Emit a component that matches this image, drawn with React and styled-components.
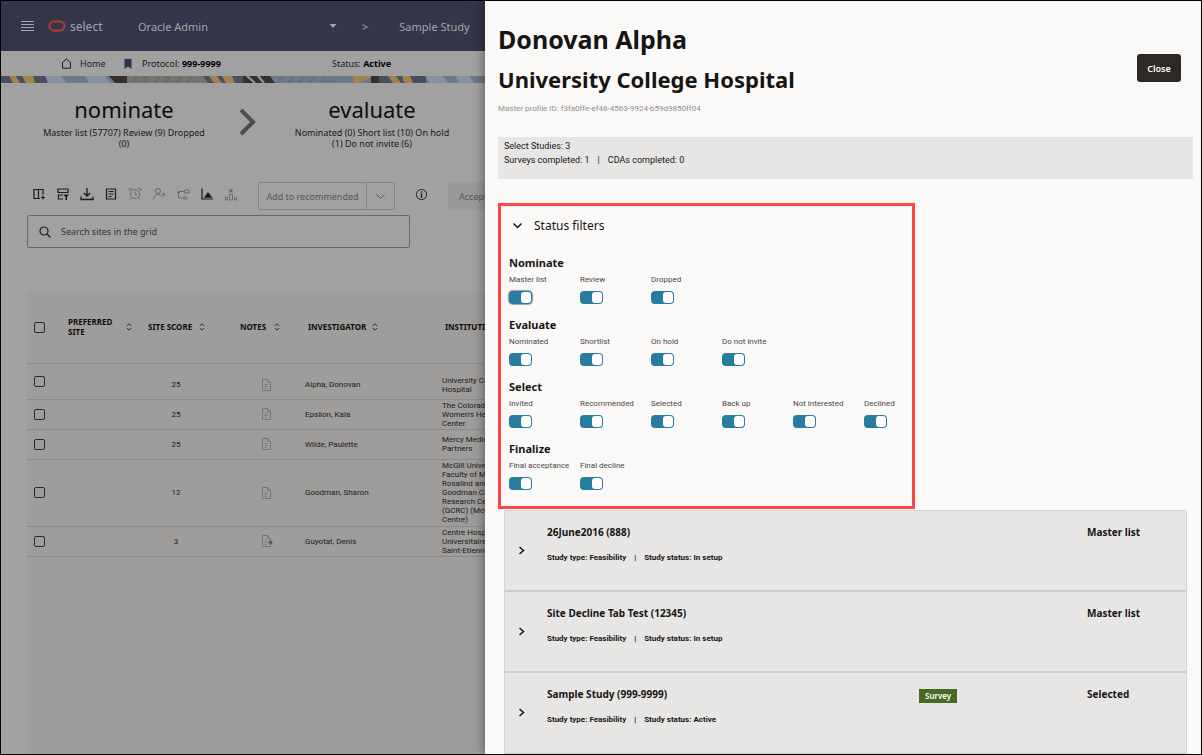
// App.jsx
import React, { useState } from 'react';
import styled, { createGlobalStyle } from 'styled-components';

const smallFont = 'Roboto, "Noto Sans", sans-serif';

const GlobalStyle = createGlobalStyle`
  * { box-sizing: border-box; }
  body { margin: 0; background: #fbf9f8; }
  body, button, input { font-family: "Noto Sans", "Open Sans", sans-serif; }
  button { padding: 0; border: 0; background: none; color: inherit; cursor: pointer; }
  h1, h2, h3, p { margin: 0; }
  svg { display: block; flex: none; }
`;

const Frame = styled.div`
  display: grid;
  grid-template-columns: minmax(0, 121fr) minmax(0, 179fr);
  min-height: 100vh;
  border: 1px solid #000;
`;

/* ---------- dimmed page ---------- */

const Page = styled.main`
  display: flex;
  flex-direction: column;
  overflow: hidden;
  background: #a1a1a1;
  color: #1b1a19;
  white-space: nowrap;
`;

const TopBar = styled.header`
  display: flex;
  align-items: center;
  height: 50px;
  padding-left: 20px;
  background: #333548;
  color: #a5a5aa;
  font-size: 11px;
`;

const Brand = styled.span`
  display: flex;
  align-items: center;
  gap: 4px;
  width: 90px;
  margin-left: 13px;
  font-size: 12px;
`;

const OrgPicker = styled.button`
  display: flex;
  align-items: center;
  justify-content: space-between;
  width: 199px;
  font-size: 11px;
`;

const Crumb = styled.span`
  margin-left: ${(props) => props.$gap}px;
`;

const InfoBar = styled.nav`
  display: flex;
  align-items: center;
  height: 25px;
  padding-left: 60px;
  font-size: 9px;
  b { color: #000; }
`;

const InfoItem = styled.span`
  display: flex;
  align-items: center;
  gap: ${(props) => props.$gap}px;
  width: ${(props) => props.$width}px;
  a { color: inherit; text-decoration: none; }
`;

const Stages = styled.section`
  display: flex;
  align-items: center;
  gap: 33px;
  height: 99px;
  padding: 0 0 22px 41px;
`;

const Stage = styled.div`
  width: 164px;
  flex: none;
  text-align: center;
  white-space: normal;
  font-size: 9px;
  line-height: 11px;
  h2 {
    padding-bottom: 4px;
    font-size: 22px;
    font-weight: 400;
    line-height: 28px;
    color: #0d0d0d;
  }
`;

const Toolbar = styled.div`
  display: flex;
  align-items: flex-start;
  height: 33px;
  padding-left: 31px;
`;

const Tools = styled.div`
  display: flex;
  flex: none;
  align-items: center;
  gap: 10px;
  height: 24px;
  width: 226px;
`;

const Tool = styled.button`
  color: ${(props) => (props.$off ? '#6b6b6b' : '#1b1a19')};
`;

const SplitButton = styled.div`
  display: flex;
  width: 137px;
  height: 28px;
  flex: none;
  border: 1px solid #838383;
  border-radius: 2px;
  color: #585858;
  button { font-size: 9px; }
  button:first-child { flex: 1; }
  button:last-child {
    display: flex;
    align-items: center;
    justify-content: center;
    width: 28px;
    border-left: 1px solid #838383;
  }
`;

const InfoButton = styled.button`
  display: flex;
  flex: none;
  align-items: center;
  height: 24px;
  margin: 0 20px;
`;

const AcceptButton = styled.button`
  flex: none;
  height: 28px;
  padding: 0 11px;
  border-radius: 2px;
  background: #999;
  color: #585858;
  font-size: 9px;
`;

const SearchBox = styled.label`
  display: flex;
  align-items: center;
  gap: 10px;
  width: 383px;
  height: 33px;
  margin: 0 0 44px 26px;
  padding: 0 11px;
  border: 1px solid #696969;
  border-radius: 2px;
  input {
    flex: 1;
    padding: 0;
    border: 0;
    outline: 0;
    background: none;
    font-size: 9px;
  }
  input::placeholder { color: #333; opacity: 1; }
`;

const GridArea = styled.div`
  flex: 1;
  margin-left: 26px;
  overflow: hidden;
  background: #9f9d9b;
`;

const SiteTable = styled.table`
  width: 506px;
  table-layout: fixed;
  border-collapse: collapse;
  font-size: 8px;
  line-height: 9px;
  th, td {
    padding: 0 0 0 9px;
    border-bottom: 1px solid #8d8b89;
    text-align: left;
  }
  td { font-family: ${smallFont}; }
  th { height: 71px; padding-left: 12px; }
  th:first-child, td:first-child { padding: 0 0 0 7px; }
  tbody tr:first-child td:not(:first-child) { padding-top: 7px; }
`;

const SiteRow = styled.tr`
  height: ${(props) => props.$height}px;
`;

const ScoreCell = styled.td`
  && { padding-left: 0; padding-right: 12px; text-align: center; }
`;

const NoteCell = styled.td`
  svg { margin: 0 auto; }
`;

const Lines = styled.td`
  white-space: pre-line;
`;

const HeadLabel = styled.span`
  display: flex;
  align-items: center;
  gap: ${(props) => props.$gap}px;
  line-height: 10px;
  white-space: pre-line;
  color: #0d0d0d;
`;

const CheckBox = styled.input.attrs({ type: 'checkbox' })`
  display: block;
  appearance: none;
  width: 11px;
  height: 11px;
  margin: 0;
  border: 1px solid #2c2a29;
  border-radius: 2px;
`;

/* ---------- drawer ---------- */

const Drawer = styled.aside`
  position: relative;
  padding: 0 8px 0 13px;
  background: #fbf9f8;
  color: #161513;
  box-shadow: -2px 0 10px rgba(0, 0, 0, 0.35);
`;

const DrawerHead = styled.header`
  display: flex;
  justify-content: space-between;
  align-items: center;
  height: 136px;
  padding: 0 12px 2px 0;
`;

const Name = styled.h1`
  font-size: ${(props) => props.$size}px;
  line-height: 40px;
  font-weight: 700;
`;

const ProfileId = styled.p`
  padding-top: 2px;
  color: #8f8d8b;
  font-family: ${smallFont};
  font-size: 8px;
  line-height: 16px;
`;

const CloseButton = styled.button`
  width: 44px;
  height: 28px;
  border-radius: 3px;
  background: #2d2926;
  color: #fff;
  font-size: 9px;
  font-weight: 600;
`;

const Summary = styled.section`
  height: 42px;
  margin-bottom: 24px;
  padding: 2px 6px;
  background: #e8e6e5;
  font-family: ${smallFont};
  font-size: 9px;
  line-height: 14px;
`;

const Split = styled.span`
  margin: 0 8px;
`;

const Filters = styled.section`
  width: 60%;
  height: 306px;
  margin-bottom: 1px;
  padding: 8px 0 0 8px;
  border: 3px solid #ff4545;
`;

const FiltersToggle = styled.button`
  display: flex;
  align-items: center;
  gap: 12px;
  height: 22px;
  margin: 0 0 17px 4px;
  font-size: 12px;
`;

const FilterGroup = styled.div`
  height: 62px;
  h3 { font-size: 11px; line-height: 20px; }
`;

const FilterRow = styled.div`
  display: grid;
  grid-template-columns: repeat(6, 71px);
`;

const FilterLabel = styled.label`
  display: grid;
  gap: 4px;
  color: #4a4846;
  font-family: ${smallFont};
  font-size: 8px;
  line-height: 14px;
  white-space: nowrap;
`;

const Toggle = styled.input.attrs({ type: 'checkbox' })`
  display: flex;
  appearance: none;
  width: 23px;
  height: 13px;
  margin: 0;
  padding: 1px;
  border-radius: 4px;
  background: #267d9e;
  &:checked { justify-content: flex-end; }
  &::before {
    content: "";
    width: 10px;
    border-radius: 3px;
    background: #fff;
  }
  box-shadow: ${(props) => (props.$ring ? '0 0 1px 1px #9b9b9b' : 'none')};
`;

const StudyList = styled.section`
  margin: 0 6px;
  border: 1px solid #d5d3d2;
  border-bottom: 0;
`;

const StudyCard = styled.article`
  display: grid;
  grid-template-columns: 42px 1fr 168px 99px;
  height: 81px;
  border-bottom: 2px solid #cfcdcc;
  background: #e8e6e5;
  font-size: 10px;
  font-weight: 700;
  line-height: 16px;
  > * { margin-top: 13px; }
  &:last-child { border-bottom-width: 1px; }
`;

const ExpandButton = styled.button`
  display: flex;
  align-items: center;
  height: 53px;
  padding-left: 13px;
`;

const StudyTitle = styled.h3`
  font-size: 10px;
  line-height: 16px;
`;

const StudyMeta = styled.p`
  padding-top: 11px;
  font-family: ${smallFont};
  font-size: 8px;
  line-height: 14px;
  font-weight: 700;
`;

const Badge = styled.span`
  display: inline-block;
  padding: 0 6px;
  margin-top: 3px;
  background: #456b23;
  color: #fff;
  font-size: 8px;
  line-height: 14px;
  font-weight: 600;
`;

/* ---------- drawings ---------- */

const Icon = ({ size = 14, children, width = 1 }) => (
  <svg width={size} height={size} viewBox="0 0 14 14" fill="none" stroke="currentColor" strokeWidth={width}>
    {children}
  </svg>
);

const icons = {
  columns: <Icon><path d="M2 2.5h9v5M2 2v10M2 11.5h6M6.5 2.5v9M11 8.500v4M9 10.500h4" strokeWidth="1.200" /></Icon>,
  filterRows: (
    <Icon>
      <path d="M2 2h10v3.500H2zM2 8h5M2.500 8v4H7" strokeWidth="1.200" />
      <path d="M7.500 7.500h5.500l-2 2.500v3h-1.500v-3z" fill="currentColor" stroke="none" />
    </Icon>
  ),
  download: <Icon><path d="M1 9.500v3h12v-3M7 1v8M3.800 6 7 9.200 10.200 6" strokeWidth="1.300" /></Icon>,
  note: <Icon><path d="M2.500 2h9v10h-9zM4.500 4.500h5M4.500 7h5M4.500 9.500h3" strokeWidth="1.200" /></Icon>,
  alarm: (
    <Icon>
      <circle cx="7" cy="7" r="4.500" />
      <path d="M7 4.500V7.500h2M1.500 4V1.500H4M12.500 4V1.500H10M3.500 10.500 2 12.500M10.500 10.500 12 12.500" />
    </Icon>
  ),
  addUser: <Icon><circle cx="6" cy="4" r="2.500" /><path d="M1.500 12.500C2 6.500 8 6.500 9.500 9.500M11.500 5.500v4M9.500 7.500h4" /></Icon>,
  flow: (
    <Icon>
      <path d="M8.500 3h4.500v3H8.500zM8.500 4.500h-6v6.500H8M1 6 2.500 4.500 4 6" />
      <circle cx="9.500" cy="11" r="1.500" />
    </Icon>
  ),
  chart: (
    <Icon>
      <path d="M2 1.500v10.500h11" strokeWidth="1.200" />
      <path d="M4 10.800 8 5l4.500 5.800z" fill="currentColor" stroke="none" />
    </Icon>
  ),
  podium: (
    <Icon>
      <path d="M1.500 10h2v3h-2zM5.500 7.500h3v5.500h-3zM10.500 10.500h2V13h-2z" />
      <path d="m7 1 .8 1.700 1.800.2-1.400 1.200.4 1.900L7 5l-1.600 1 .4-1.900-1.400-1.200 1.800-.2z" fill="currentColor" stroke="none" />
    </Icon>
  ),
};

const tools = [
  { name: 'Columns', icon: icons.columns },
  { name: 'Filter rows', icon: icons.filterRows },
  { name: 'Download', icon: icons.download },
  { name: 'Notes', icon: icons.note },
  { name: 'Reminder', icon: icons.alarm, off: true },
  { name: 'Add contact', icon: icons.addUser, off: true },
  { name: 'Workflow', icon: icons.flow, off: true },
  { name: 'Chart', icon: icons.chart },
  { name: 'Ranking', icon: icons.podium, off: true },
];

const ChevronDown = ({ size = 9, width = 1.5 }) => (
  <svg width={size} height={size} viewBox="0 0 9 9" fill="none" stroke="currentColor" strokeWidth={width}>
    <path d="m.5 2.500 4 4 4-4" />
  </svg>
);

const SortIcon = () => (
  <svg width="6" height="8" viewBox="0 0 6 8" fill="none" stroke="#2c2a29">
    <path d="M.8 3 3 .8 5.200 3M.8 5 3 7.200 5.200 5" />
  </svg>
);

const NoteIcon = ({ marked }) => (
  <svg width="12" height="12" viewBox="0 0 12 12" fill="none" stroke="#767472">
    <path d="M1.500.5h5l3 3v8h-8z" />
    <path d="M6.500.5v3h3M3.500 5.500h3M3.500 7.500h3M3.500 9.500h2" strokeWidth=".8" />
    {marked && <path d="m9.500 5.500 2 2-2 2-2-2z" fill="#605e5c" stroke="#605e5c" />}
  </svg>
);

const PatternStrip = () => (
  <svg width="100%" height="7" viewBox="0 0 484 7" preserveAspectRatio="xMinYMid slice">
    <path fill="#6d7889" d="M0 0h484v7H0z" />
    <path fill="#494f63" d="M0 0h46v7H0zM200 0h50v7h-50zM375 0h50v7h-50z" />
    <path fill="#a28249" d="M8 0h7l4 7h-7zM21 0h11l2 7h-9zM208 0h8l5 7h-8zM221 0h10l3 7h-9zM352 0h20l-14 7h-6zM387 0h8l5 7h-8zM401 0h8l3 7h-9z" />
    <path fill="#8791a0" d="M44 0h16l5 7H48zM84 0h20l5 7H88zM424 0h18l5 7h-18zM454 0h14l5 7h-15z" />
    <path fill="#35302e" d="M108 0h18v7h-12zM242 0h14l8 7h-22zM259 0h10l5 7h-13zM370 0h8v7h-8z" />
    <path fill="#77746e" d="M126 0h76l5 7h-81z" />
    <path stroke="#605d59" fill="none" d="m132 6 4-5m6 1c6-3 5 3 0 4m12 0 5-5m5 1c5-3 5 3 0 4m12-4c6-3 5 3 0 4m10 0 5-5" />
    <path stroke="#9d9a96" strokeWidth="2" d="m246 0 8 7m3-7 6 7" />
    <path stroke="#5b6679" fill="none" d="m276 6 5-4m6 4 5-4m6 4 5-4m6 4 5-4m6 4 5-4m6 4 5-4" />
  </svg>
);

/* ---------- data ---------- */

const sites = [
  { score: 25, name: 'Alpha, Donovan', place: 'University College\nHospital', height: 36 },
  { score: 25, name: 'Epsilon, Kaia', place: "The Colorado\nWomen's Health\nCenter", height: 30 },
  { score: 25, name: 'Wilde, Paulette', place: 'Mercy Medical\nPartners', height: 30 },
  {
    score: 12,
    name: 'Goodman, Sharon',
    place: 'McGill University\nFaculty of Medicine\nRosalind and Morris\nGoodman Cancer\nResearch Centre\n(GCRC) (McGill\nCentre)',
    height: 67,
  },
  { score: 3, name: 'Guyotat, Denis', place: 'Centre Hospitalier\nUniversitaire\nSaint-Etienne', height: 30, marked: true },
];

const headings = [
  { text: 'PREFERRED\nSITE', gap: 14 },
  { text: 'SITE SCORE', gap: 7 },
  { text: 'NOTES', gap: 8 },
  { text: 'INVESTIGATOR', gap: 6 },
  { text: 'INSTITUTION', gap: 8 },
];

const filterGroups = [
  { title: 'Nominate', items: ['Master list', 'Review', 'Dropped'] },
  { title: 'Evaluate', items: ['Nominated', 'Shortlist', 'On hold', 'Do not invite'] },
  { title: 'Select', items: ['Invited', 'Recommended', 'Selected', 'Back up', 'Not interested', 'Declined'] },
  { title: 'Finalize', items: ['Final acceptance', 'Final decline'] },
];

const studies = [
  { title: '26June2016 (888)', state: 'In setup', status: 'Master list' },
  { title: 'Site Decline Tab Test (12345)', state: 'In setup', status: 'Master list' },
  { title: 'Sample Study (999-9999)', state: 'Active', status: 'Selected', survey: true },
];

/* ---------- parts ---------- */

const Header = () => (
  <>
    <TopBar>
      <button aria-label="Menu">
        <svg width="14" height="12" viewBox="0 0 14 12" stroke="#a5a5aa">
          <path d="M0 1.500h13M0 4.500h13M0 7.500h13M0 10.500h13" />
        </svg>
      </button>
      <Brand>
        <svg width="18" height="12" viewBox="0 0 18 12" fill="none" stroke="#9c3a37" strokeWidth="2.400">
          <rect x="1.500" y="1.500" width="15" height="9" rx="4.500" />
        </svg>
        select
      </Brand>
      <OrgPicker>
        Oracle Admin
        <svg width="8" height="4" viewBox="0 0 8 4" fill="currentColor"><path d="M.5 0h7L4 4z" /></svg>
      </OrgPicker>
      <Crumb $gap={25}>&gt;</Crumb>
      <Crumb $gap={31}>Sample Study</Crumb>
    </TopBar>
    <InfoBar>
      <InfoItem $gap={8} $width={63}>
        <svg width="11" height="11" viewBox="0 0 11 11" fill="none" stroke="#1b1a19">
          <path d="M1.500 10.200V4.500L5.500 1l4 3.500v5.700z" />
        </svg>
        <a href="#home">Home</a>
      </InfoItem>
      <InfoItem $gap={10} $width={208}>
        <svg width="8" height="10" viewBox="0 0 8 10" fill="#2b3350"><path d="M.5 0h7v10L4 7.500.5 10z" /></svg>
        <span>Protocol: <b>999-9999</b></span>
      </InfoItem>
      <span>Status: <b>Active</b></span>
    </InfoBar>
    <PatternStrip />
  </>
);

const SiteGrid = () => (
  <GridArea>
    <SiteTable>
      <colgroup>
        {[29, 80, 92, 68, 137, 100].map((w) => <col key={w} width={w} />)}
      </colgroup>
      <thead>
        <tr>
          <th><CheckBox aria-label="Select all sites" /></th>
          {headings.map((head) => (
            <th key={head.text}>
              <HeadLabel $gap={head.gap}>{head.text}<button aria-label="Sort"><SortIcon /></button></HeadLabel>
            </th>
          ))}
        </tr>
      </thead>
      <tbody>
        {sites.map((site) => (
          <SiteRow key={site.name} $height={site.height}>
            <td><CheckBox aria-label={site.name} /></td>
            <td />
            <ScoreCell>{site.score}</ScoreCell>
            <NoteCell><NoteIcon marked={site.marked} /></NoteCell>
            <td>{site.name}</td>
            <Lines>{site.place}</Lines>
          </SiteRow>
        ))}
      </tbody>
    </SiteTable>
  </GridArea>
);

const StatusFilters = () => {
  const [off, setOff] = useState([]);

  const flip = (name) => {
    setOff(off.includes(name) ? off.filter((n) => n !== name) : [...off, name]);
  };

  return (
    <Filters>
      <FiltersToggle><ChevronDown />Status filters</FiltersToggle>
      {filterGroups.map((group) => (
        <FilterGroup key={group.title}>
          <h3>{group.title}</h3>
          <FilterRow>
            {group.items.map((name) => (
              <FilterLabel key={name}>
                {name}
                <Toggle
                  $ring={name === 'Master list'}
                  checked={!off.includes(name)}
                  onChange={() => flip(name)}
                />
              </FilterLabel>
            ))}
          </FilterRow>
        </FilterGroup>
      ))}
    </Filters>
  );
};

const App = () => (
  <Frame>
    <GlobalStyle />
    <Page>
      <Header />
      <Stages>
        <Stage>
          <h2>nominate</h2>
          Master list (57707) Review (9) Dropped (0)
        </Stage>
        <svg width="18" height="30" viewBox="0 0 18 30" fill="none" stroke="#4d4d4d" strokeWidth="4">
          <path d="m2 3 12 12L2 27" />
        </svg>
        <Stage>
          <h2>evaluate</h2>
          Nominated (0) Short list (10) On hold (1) Do not invite (6)
        </Stage>
      </Stages>
      <Toolbar>
        <Tools>
          {tools.map((tool) => (
            <Tool key={tool.name} aria-label={tool.name} $off={tool.off}>{tool.icon}</Tool>
          ))}
        </Tools>
        <SplitButton>
          <button>Add to recommended</button>
          <button aria-label="More options"><ChevronDown width={1} /></button>
        </SplitButton>
        <InfoButton aria-label="Information">
          <Icon size={13}><circle cx="7" cy="7" r="5.500" /><path d="M7 6v4.500M7 3.500V5" strokeWidth="1.500" /></Icon>
        </InfoButton>
        <AcceptButton>Accept</AcceptButton>
      </Toolbar>
      <SearchBox>
        <svg width="12" height="12" viewBox="0 0 12 12" fill="none" stroke="#1b1a19" strokeWidth="1.200">
          <circle cx="5" cy="5" r="4" /><path d="m8 8 3.500 3.500" />
        </svg>
        <input aria-label="Search sites" placeholder="Search sites in the grid" />
      </SearchBox>
      <SiteGrid />
    </Page>
    <Drawer>
      <DrawerHead>
        <div>
          <Name $size={25}>Donovan Alpha</Name>
          <Name as="h2" $size={22}>University College Hospital</Name>
          <ProfileId>Master profile ID: f3fa0ffe-ef48-4563-9924-b59d9850ff04</ProfileId>
        </div>
        <CloseButton>Close</CloseButton>
      </DrawerHead>
      <Summary>
        <p>Select Studies: 3</p>
        <p>Surveys completed: 1<Split>|</Split>CDAs completed: 0</p>
      </Summary>
      <StatusFilters />
      <StudyList>
        {studies.map((study) => (
          <StudyCard key={study.title}>
            <ExpandButton aria-label={`Expand ${study.title}`}>
              <svg width="7" height="9" viewBox="0 0 7 9" fill="none" stroke="currentColor" strokeWidth="1.500">
                <path d="m1.500 1 4 3.500-4 3.500" />
              </svg>
            </ExpandButton>
            <div>
              <StudyTitle>{study.title}</StudyTitle>
              <StudyMeta>Study type: Feasibility<Split>|</Split>Study status: {study.state}</StudyMeta>
            </div>
            <div>{study.survey && <Badge>Survey</Badge>}</div>
            <span>{study.status}</span>
          </StudyCard>
        ))}
      </StudyList>
    </Drawer>
  </Frame>
);

export default App;
